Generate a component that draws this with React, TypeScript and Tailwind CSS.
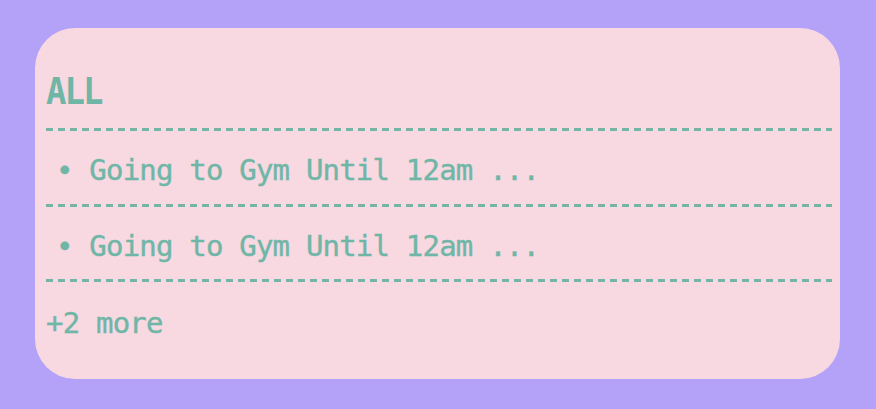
const items = ['Going to Gym Until 12am ...', 'Going to Gym Until 12am ...'];

function Dashes() {
  return (
    <div className="h-[3px] w-full bg-[repeating-linear-gradient(90deg,#73b5a6_0_7px,transparent_7px_12px)]" />
  );
}

export default function App() {
  return (
    <div className="h-[409px] w-full bg-[#b4a2f8] pl-[35px] pt-[28px] font-['DejaVu_Sans_Mono',monospace] text-[#70b6a7]">
      <div className="h-[351px] w-[805px] rounded-[40px] bg-[#f8d8e1] pl-[11px] pr-[8px] pt-[48px]">
        {/* header */}
        <div className="origin-bottom scale-y-[1.12] text-[34px] font-bold leading-[34px] tracking-[-2px]">ALL</div>
        <div className="mt-[18px]">
          <Dashes />
        </div>

        {items.map((text, i) => (
          <div key={i}>
            <div className="mt-[25px] pl-[10px] text-[29px] leading-[29px] tracking-[-0.8px] whitespace-pre [-webkit-text-stroke:0.4px_#70b6a7]">
              {'• ' + text}
            </div>
            <div className="mt-[18.5px]">
              <Dashes />
            </div>
          </div>
        ))}

        <div className="mt-[27px] text-[29px] leading-[29px] tracking-[-0.8px] [-webkit-text-stroke:0.4px_#70b6a7]">+2 more</div>
      </div>
    </div>
  );
}
